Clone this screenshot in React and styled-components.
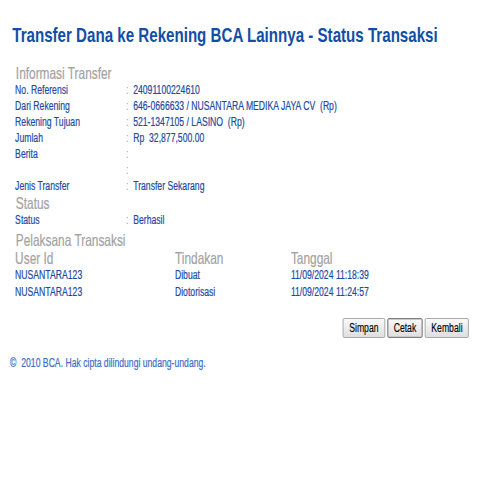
import React from 'react'
import styled, { createGlobalStyle } from 'styled-components'

const GlobalStyle = createGlobalStyle`
  html, body {
    margin: 0;
    padding: 0;
    background: #ffffff;
    overflow: hidden;
  }
  body {
    font-family: "Liberation Sans", Arial, sans-serif;
  }
`

// the reference is squeezed sideways, so the page is laid out wide and narrowed
const SCALE = 0.72

const Page = styled.div`
  width: ${500 / SCALE}px;
  box-sizing: border-box;
  padding: 23px 43px 40px 0;
  transform: scaleX(${SCALE});
  transform-origin: 0 0;
  color: #1b4aa2;
  font-size: 12px;
  -webkit-text-stroke: 0.2px currentColor;
`

const Title = styled.h1`
  margin: 0 0 17px 17px;
  font-size: 21px;
  line-height: 24px;
  font-weight: bold;
  color: #134ea6;
  -webkit-text-stroke: 0;
`

const Content = styled.div`
  padding-left: 21px;
`

const Heading = styled.div`
  font-size: 16.5px;
  line-height: 18px;
  color: #a2a2a2;
  margin-top: ${p => p.$gap || 0}px;
  padding-left: 1px;
`

const InfoRow = styled.div`
  display: grid;
  grid-template-columns: 154px 10px 1fr;
  line-height: 16px;
  height: 16px;
`

const Colon = styled.span`
  color: #8a9cc0;
  -webkit-text-stroke: 0;
`

const Value = styled.span`
  white-space: pre;
`

const Table = styled.div`
  display: grid;
  grid-template-columns: 222px 161px 1fr;
`

const HeadCell = styled.div`
  font-size: 16.5px;
  line-height: 18px;
  color: #a2a2a2;
`

const Cell = styled.div`
  line-height: 17px;
`

const ButtonBar = styled.div`
  display: flex;
  justify-content: flex-end;
  gap: 3px;
  margin-top: 17px;
`

const Button = styled.button`
  font-family: "Liberation Sans", Arial, sans-serif;
  font-size: 12px;
  height: 20px;
  padding: 0 8px;
  color: #000;
  -webkit-text-stroke: 0.15px #000;
  background: linear-gradient(#fafafa, #dedede);
  border: 1px solid ${p => (p.$active ? '#6b6b6b' : '#9a9a9a')};
  border-radius: 2px;
  box-shadow: ${p => (p.$active ? 'inset 0 0 0 1px #c9c9c9' : 'none')};
`

const Footer = styled.div`
  margin: 17px 0 0 14px;
  line-height: 16px;
  color: #3d6cc4;
  white-space: pre;
`

const info = [
  ['No. Referensi', '24091100224610'],
  ['Dari Rekening', '646-0666633 / NUSANTARA MEDIKA JAYA CV  (Rp)'],
  ['Rekening Tujuan', '521-1347105 / LASINO  (Rp)'],
  ['Jumlah', 'Rp  32,877,500.00'],
  ['Berita', ''],
  ['', ''],
  ['Jenis Transfer', 'Transfer Sekarang'],
]

const log = [
  ['NUSANTARA123', 'Dibuat', '11/09/2024 11:18:39'],
  ['NUSANTARA123', 'Diotorisasi', '11/09/2024 11:24:57'],
]

const Row = ({ label, value }) => <InfoRow>
  <span>{label}</span>
  <Colon>:</Colon>
  <Value>{value}</Value>
</InfoRow>

const App = () => {
  return <>
    <GlobalStyle />
    <Page>
      <Title>Transfer Dana ke Rekening BCA Lainnya - Status Transaksi</Title>
      <Content>
        <Heading>Informasi Transfer</Heading>
        {info.map(([label, value], i) => <Row key={i} label={label} value={value} />)}
        <Heading>Status</Heading>
        <Row label="Status" value="Berhasil" />
        <Heading $gap={3}>Pelaksana Transaksi</Heading>
        <Table>
          <HeadCell>User Id</HeadCell>
          <HeadCell>Tindakan</HeadCell>
          <HeadCell>Tanggal</HeadCell>
          {log.map(r => r.map((c, j) => <Cell key={r[1] + j}>{c}</Cell>))}
        </Table>
      </Content>
      <ButtonBar>
        <Button>Simpan</Button>
        <Button $active>Cetak</Button>
        <Button>Kembali</Button>
      </ButtonBar>
      <Footer>{'©  2010 BCA. Hak cipta dilindungi undang-undang.'}</Footer>
    </Page>
  </>
}

export default App
